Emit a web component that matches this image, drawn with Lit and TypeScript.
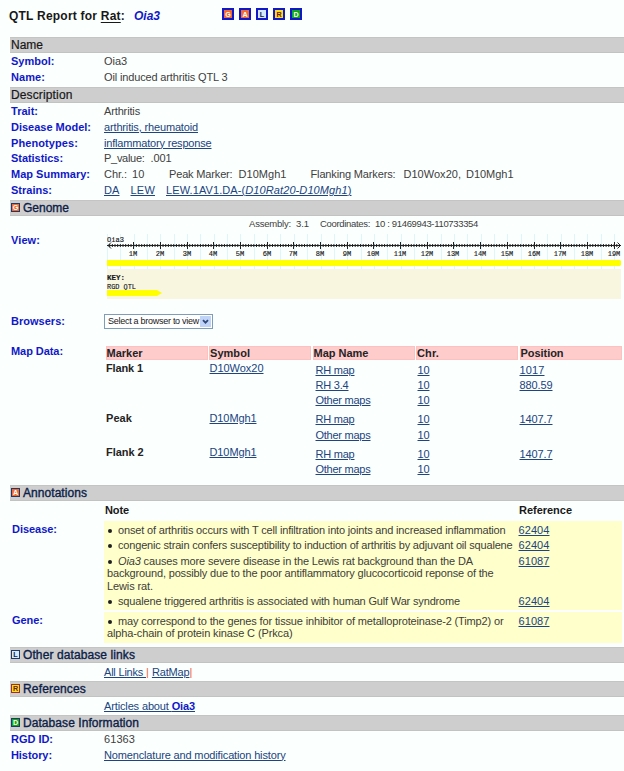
import { LitElement, html, css, svg } from "lit";
import { customElement, property } from "lit/decorators.js";

/** Inline run of text whose tracking is adjusted to occupy a given width. */
@customElement("fit-text")
class FitText extends LitElement {
  @property({ type: Number }) w = 0;
  static styles = css`
    :host { display: inline-block; white-space: pre; }
  `;
  render() {
    return html`<slot></slot>`;
  }
  firstUpdated() {
    requestAnimationFrame(() => this.fit());
  }
  fit() {
    const n = (this.textContent || "").length;
    if (!this.w || !n) return;
    this.style.letterSpacing = "0px";
    const natural = this.getBoundingClientRect().width;
    this.style.letterSpacing = (this.w - natural) / n + "px";
  }
}

const t = (text: unknown, w: number, cls = "") =>
  html`<fit-text class=${cls} .w=${w}>${text}</fit-text>`;
const a = (text: unknown, w: number) => t(text, w, "link");

const COLORS: Record<string, [string, string]> = {
  G: ["#f26a30", "#fff"],
  A: ["#f26a30", "#fff"],
  L: ["#d4eafa", "#102050"],
  R: ["#ffdc18", "#702010"],
  D: ["#10a818", "#fff"],
};

const badge = (k: string, size: number, edge: string, bw: number) => {
  const [bg, fg] = COLORS[k];
  return html`<svg class="badge" width=${size} height=${size} viewBox="0 0 ${size} ${size}">
    ${svg`<rect width=${size} height=${size} fill=${edge}></rect>
    <rect x=${bw} y=${bw} width=${size - 2 * bw} height=${size - 2 * bw} fill=${bg}></rect>
    <text x=${size / 2} y=${size / 2 + 2.6} text-anchor="middle" font-size="7.2" font-weight="bold" fill=${fg}>${k}</text>`}
  </svg>`;
};

const bar = (title: string, w: number, k = "") => html`
  <div class="bar ${k ? "navy" : ""}">
    ${k ? badge(k, 9, k === "R" ? "#a03020" : "#203868", 1) : ""}${t(title, w)}
  </div>`;

const row = (label: string, lw: number, content: unknown) => html`
  <div class="row"><div class="label">${label ? t(label, lw) : ""}</div><div class="val">${content}</div></div>`;

const M = 26.69;

const genomeView = () => {
  const range = (n: number) => Array.from({ length: n }, (_, i) => i);
  return html`<svg class="view" width="515" height="67" viewBox="0 0 515 67">
    ${range(39).map((i) => svg`<rect x=${Math.round(i * M / 2)} y="1" width="1" height="35" fill="#dcf6fa"></rect>`)}
    <text x="0" y="8.5" class="mono" textLength="17" lengthAdjust="spacingAndGlyphs">Oia3</text>
    <rect x="0" y="12" width="514" height="1" fill="#222"></rect>
    <path d="M4 9.5L1 12.5L4 15.5M510.500 9.500L513.500 12.500L510.500 15.500" fill="none" stroke="#222"></path>
    ${range(192).map((i) => svg`<rect x=${(i + 1) * M / 10 - 0.5} y="11" width="1" height="3" fill="#222"></rect>`)}
    ${range(19).map((i) => {
      const w = i < 9 ? 8.5 : 12.5;
      const x = Math.round((i + 1) * M - 0.5);
      return svg`<rect x=${x} y="9" width="1" height="7" fill="#222"></rect>
      <text x=${x - w / 2} y="22.500" class="mono" textLength=${w} lengthAdjust="spacingAndGlyphs">${i + 1}M</text>`;
    })}
    <path d="M0 27H513L514 28V32L513 33H0Z" fill="#ff0"></path>
    <rect x="0" y="36" width="514" height="30" fill="#f9f6e0"></rect>
    <text x="0" y="47" class="mono key" textLength="18" lengthAdjust="spacingAndGlyphs">KEY:</text>
    <text x="0" y="56" class="mono" textLength="29" lengthAdjust="spacingAndGlyphs">RGD QTL</text>
    <path d="M0 57H50L55 60L50 63H0Z" fill="#ff0"></path>
  </svg>`;
};

type MapRow = [string, number, number, string, number];
const MARKERS: { name: string; nw: number; sym: string; sw: number; maps: MapRow[] }[] = [
  { name: "Flank 1", nw: 37, sym: "D10Wox20", sw: 54,
    maps: [["RH map", 39, 12, "1017", 25], ["RH 3.4", 33, 12, "880.59", 33], ["Other maps", 55, 12, "", 0]] },
  { name: "Peak", nw: 26, sym: "D10Mgh1", sw: 47,
    maps: [["RH map", 39, 12, "1407.7", 33], ["Other maps", 55, 12, "", 0]] },
  { name: "Flank 2", nw: 37.5, sym: "D10Mgh1", sw: 47,
    maps: [["RH map", 39, 12, "1407.7", 33], ["Other maps", 55, 12, "", 0]] },
];

const HEADS: [string, number][] = [["Marker", 36], ["Symbol", 40], ["Map Name", 55], ["Chr.", 22], ["Position", 43]];

const note = (lines: [unknown, number][], ref: string) => html`
  <div class="note">
    <div class="lines">
      ${lines.map(([s, w], i) => html`<div class="line">${i === 0 ? html`<i class="dot"></i>` : ""}${t(s, w)}</div>`)}
    </div>
    <div class="ref">${a(ref, 31)}</div>
  </div>`;

@customElement("app-root")
class AppRoot extends LitElement {
  static styles = css`
    :host {
      display: block; width: 624px; height: 771px; overflow: hidden; box-sizing: border-box;
      background: #fbfffe; color: #404040;
      font: 11px/16px "Liberation Sans", Arial, sans-serif;
    }
    .page { padding-left: 10px; display: flex; flex-direction: column; }
    svg { display: block; flex: none; font-family: "Liberation Sans", Arial, sans-serif; }
    .link { color: #204480; text-decoration: underline; text-underline-offset: 1px; text-decoration-thickness: 1px; }
    .top { display: flex; height: 37px; box-sizing: border-box; padding-top: 8px; margin-left: -1px; }
    .title { width: 213px; font-weight: bold; font-size: 12px; line-height: 16px; color: #181818; white-space: nowrap; }
    .title u { text-underline-offset: 2px; }
    .qtl { font-style: italic; color: #1018c8; margin-left: 9px; }
    .badges { display: flex; gap: 5px; }
    .bar {
      height: 16px; box-sizing: border-box; background: #cecece; border-top: 1px solid #c4c4c4; border-bottom: 1px solid #c2c2c2;
      display: flex; align-items: center; padding-left: 1px; font-size: 12px; line-height: 14px; color: #181818;
      -webkit-text-stroke: 0.2px currentColor;
    }
    .bar .badge { margin-right: 3px; -webkit-text-stroke: 0; }
    .navy { color: #0c2048; -webkit-text-stroke: 0.35px currentColor; }
    .row { display: flex; height: 15.8px; line-height: 16px; }
    .label { width: 93px; flex: none; padding-left: 1px; box-sizing: border-box; font-weight: bold; color: #1018c8; }
    .val { flex: 1; margin-left: 1px; white-space: nowrap; }
    .g2 { padding-bottom: 2px; }
    .basic .row { height: 16px; }
    .s { display: inline-block; }
    .s8 { width: 8px; } .s11 { width: 11px; } .s24 { width: 24px; } .s25 { width: 24.500px; } .s5 { width: 5px; }
    .s6 { width: 6px; }
    .assembly { height: 17px; line-height: 16px; font-size: 9.5px; padding-left: 239px; white-space: nowrap; }
    .viewrow { display: flex; height: 81px; }
    .viewrow .label { width: 97px; line-height: 14px; }
    .mono { font: 8px "Liberation Mono", monospace; fill: #181818; stroke: #181818; stroke-width: 0.15px; }
    .key { font-weight: bold; }
    .browsers { display: flex; height: 32px; }
    .browsers .label { width: 94px; line-height: 14px; }
    .select {
      display: flex; align-items: center; justify-content: space-between; width: 109px; height: 15px; box-sizing: border-box;
      border: 1px solid #7f9db9; background: #fff; color: #181818; font-size: 9px; line-height: 13px; padding: 0 1px 0 3px;
    }
    .arrow { background: #c0d4f8; }
    .mapdata { display: flex; height: 139px; }
    .mapdata .label { width: 95.5px; line-height: 10px; }
    .table { flex: none; width: 516.500px; }
    .grid { display: grid; grid-template-columns: repeat(5, 102px); column-gap: 1.5px; color: #242424; }
    .heads { margin-bottom: 1.4px; }
    .head { background: #ffcccc; border: 1px solid #ffc0c0; box-sizing: border-box; height: 14px; line-height: 13px; font-weight: bold; }
    .marker { grid-template-columns: 103.5px 105px 103px 102px 102px; column-gap: 0; padding-bottom: 2px; }
    .marker > div { padding-left: 0.5px; }
    .first { line-height: 15px; }
    .name { font-weight: bold; }
    .cell { line-height: 15.2px; height: 15.2px; }
    .push { padding-top: 1.8px; }
    .marker > .push:nth-child(3) { padding-left: 1.5px; }
    .anno { display: grid; grid-template-columns: 94px 518px; row-gap: 2px; height: 146px; align-content: start; color: #404038; }
    .anno .label { width: 94px; padding-left: 2px; }
    .noteshead { height: 18px; line-height: 19px; display: flex; color: #181818; font-weight: bold; }
    .noteshead > :first-child { width: 414px; padding-left: 1px; }
    .box { background: #ffffcc; box-sizing: border-box; padding: 3px 0 0 3px; }
    .tall { height: 89px; }
    .short { height: 31px; }
    .note { display: flex; padding-bottom: 3.2px; }
    .lines { width: 411.500px; }
    .line { height: 12.4px; line-height: 13px; white-space: nowrap; }
    .ref { line-height: 13px; height: 12.4px; }
    .dot { display: inline-block; width: 4px; height: 4px; border-radius: 2px; background: #202020; margin: 0 6.5px 1px 0.5px; }
    .single { height: 18px; line-height: 18px; padding-left: 94px; white-space: nowrap; }
    .pipe { color: #f06040; }
    .strong { font-weight: bold; color: #1018c8; }
  `;

  render() {
    return html`<div class="page">
      <div class="top">
        <div class="title">${t(html`QTL Report for <u>Rat</u>:`, 116)}${t("Oia3", 26, "qtl")}</div>
        <div class="badges">${["G", "A", "L", "R", "D"].map((k) => badge(k, 12, "#1018c8", 2))}</div>
      </div>

      ${bar("Name", 32)}
      <div class="g2 basic">
        ${row("Symbol:", 43.5, t("Oia3", 23))}
        ${row("Name:", 34, t("Oil induced arthritis QTL 3", 123.5))}
      </div>

      ${bar("Description", 61.5)}
      <div class="g2">
        ${row("Trait:", 27, t("Arthritis", 36))}
        ${row("Disease Model:", 80, a("arthritis, rheumatoid", 94))}
        ${row("Phenotypes:", 67, a("inflammatory response", 107.5))}
        ${row("Statistics:", 52, html`${t("P_value:", 40.5)}<span class="s s6"></span>${t(".001", 21)}`)}
        ${row("Map Summary:", 79, html`${t("Chr.:", 23)}<span class="s s5"></span>${t("10", 12.5)}<span class="s s25"></span>${t("Peak Marker:", 63.5)}<span class="s s6"></span>${t("D10Mgh1", 48)}<span class="s s24"></span>${t("Flanking Markers:", 85)}<span class="s s8"></span>${t("D10Wox20,", 57.5)}<span class="s s5"></span>${t("D10Mgh1", 47.5)}`)}
        ${row("Strains:", 41, html`${a("DA", 15.5)}<span class="s s11"></span>${a("LEW", 24.5)}<span class="s s11"></span>${a(html`LEW.1AV1.DA-(<i>D10Rat20-D10Mgh1</i>)`, 185.500)}`)}
      </div>

      ${bar("Genome", 46, "G")}
      <div class="assembly">${t("Assembly:", 42)}<span class="s s5"></span>${t("3.1", 13)}<span class="s s11"></span>${t("Coordinates:", 50)}<span class="s s5"></span>${t("10 : 91469943-110733354", 103)}</div>
      <div class="viewrow"><div class="label">${t("View:", 29)}</div>${genomeView()}</div>
      <div class="browsers">
        <div class="label">${t("Browsers:", 54)}</div>
        <div class="select">${t("Select a browser to view", 91)}
          <svg class="arrow" width="11" height="11" viewBox="0 0 11 11"><path d="M3 4.200L5.500 6.700L8 4.200" fill="none" stroke="#304878" stroke-width="1.800"></path></svg>
        </div>
      </div>
      <div class="mapdata">
        <div class="label">${t("Map Data:", 52)}</div>
        <div class="table">
          <div class="grid heads">${HEADS.map(([h, w]) => html`<div class="head">${t(h, w)}</div>`)}</div>
          ${MARKERS.map((m) => html`<div class="grid marker">
            <div class="first name">${t(m.name, m.nw)}</div>
            <div class="first">${a(m.sym, m.sw)}</div>
            <div class="push">${m.maps.map((r) => html`<div class="cell">${a(r[0], r[1])}</div>`)}</div>
            <div class="push">${m.maps.map((r) => html`<div class="cell">${a("10", r[2])}</div>`)}</div>
            <div class="push">${m.maps.map((r) => html`<div class="cell">${r[3] ? a(r[3], r[4]) : ""}</div>`)}</div>
          </div>`)}
        </div>
      </div>

      ${bar("Annotations", 64, "A")}
      <div class="anno">
        <div></div><div class="noteshead"><div>${t("Note", 24)}</div>${t("Reference", 53)}</div>
        <div class="label">${t("Disease:", 45)}</div>
        <div class="box tall">
          ${note([["onset of arthritis occurs with T cell infiltration into joints and increased inflammation", 387.5]], "62404")}
          ${note([["congenic strain confers susceptibility to induction of arthritis by adjuvant oil squalene", 394.500]], "62404")}
          ${note([
            [html`<i>Oia3</i> causes more severe disease in the Lewis rat background than the DA`, 355],
            ["background, possibly due to the poor antiflammatory glucocorticoid reponse of the", 386.500],
            ["Lewis rat.", 46],
          ], "61087")}
          ${note([["squalene triggered arthritis is associated with human Gulf War syndrome", 342]], "62404")}
        </div>
        <div class="label">${t("Gene:", 31)}</div>
        <div class="box short">
          ${note([
            ["may correspond to the genes for tissue inhibitor of metalloproteinase-2 (Timp2) or", 385.500],
            ["alpha-chain of protein kinase C (Prkca)", 185.500],
          ], "61087")}
        </div>
      </div>

      ${bar("Other database links", 112, "L")}
      <div class="single">${a("All Links ", 42)}<span class="pipe">|</span> ${a("RatMap", 37.5)}<span class="pipe">|</span></div>
      ${bar("References", 63, "R")}
      <div class="single">${a(html`Articles about <span class="strong">Oia3</span>`, 91)}</div>
      ${bar("Database Information", 116, "D")}
      <div class="basic">
        ${row("RGD ID:", 42, t("61363", 31))}
        ${row("History:", 41, a("Nomenclature and modification history", 181.500))}
      </div>
    </div>`;
  }
}
